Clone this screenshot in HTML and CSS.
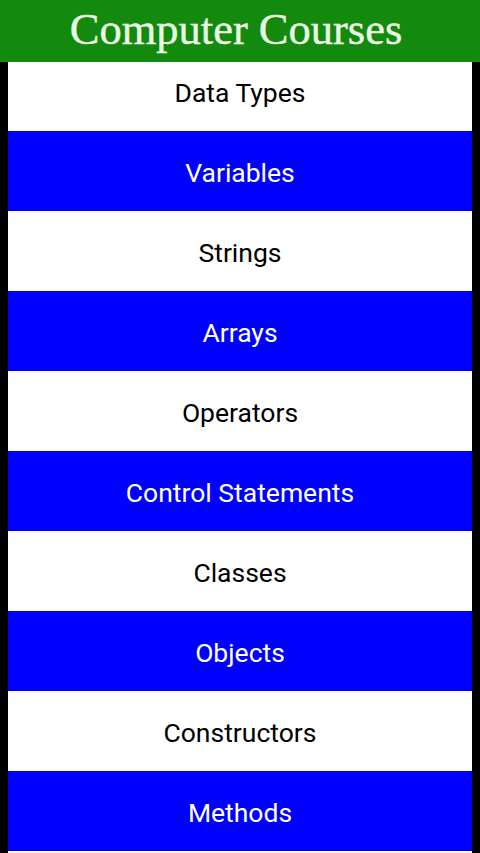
FILE: index.html
```html
<!DOCTYPE html>
<html>
<head>
<meta charset="utf-8">
<link rel="stylesheet" href="styles.css">
</head>
<body>
<header class="app-bar"><h1 class="title">Computer Courses</h1></header>
<ul class="course-list">
  <li class="item light">Data Types</li>
  <li class="item dark">Variables</li>
  <li class="item light">Strings</li>
  <li class="item dark">Arrays</li>
  <li class="item light">Operators</li>
  <li class="item dark">Control Statements</li>
  <li class="item light">Classes</li>
  <li class="item dark">Objects</li>
  <li class="item light">Constructors</li>
  <li class="item dark">Methods</li>
  <li class="item light"></li>
</ul>
</body>
</html>
```
FILE: styles.css
```css
html, body {
  margin: 0;
  padding: 0;
  height: 100%;
  overflow: hidden;
}
body {
  background: #000;
  font-family: Roboto, "Liberation Sans", sans-serif;
}
.app-bar {
  position: fixed;
  top: 0;
  left: 0;
  right: 0;
  height: 62px;
  background: #138a0e;
  display: flex;
  align-items: center;
  justify-content: center;
  padding-right: 8px;
  z-index: 2;
}
.title {
  margin: 0;
  font-family: "Liberation Serif", "Times New Roman", serif;
  font-weight: normal;
  font-size: 44.5px;
  color: #eafbe4;
  line-height: 1;
  padding-bottom: 4px;
  -webkit-text-stroke: 0.4px #eafbe4;
}
.course-list {
  list-style: none;
  margin: 0 8px;
  padding: 51px 0 0;
}
.item {
  height: 80px;
  box-sizing: border-box;
  padding-top: 3px;
  display: flex;
  align-items: center;
  justify-content: center;
  font-size: 26.5px;
}
.light {
  background: #fff;
  color: #000;
}
.dark {
  background: #0000ff;
  color: #fff;
}
```
